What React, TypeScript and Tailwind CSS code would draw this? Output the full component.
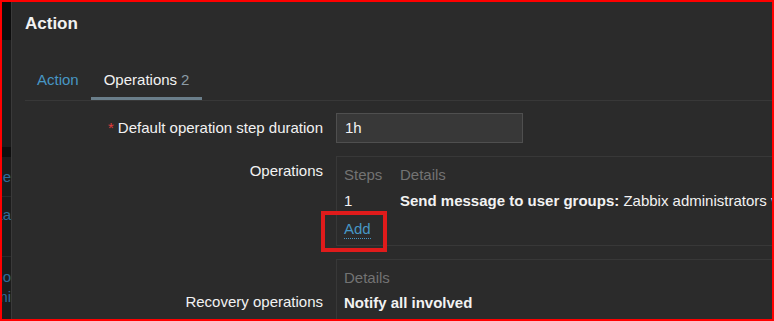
export default function App() {
  const font = "font-['Liberation_Sans',Arial,sans-serif]";

  return (
    <div className={`relative w-[774px] h-[321px] overflow-hidden border-2 border-[#ff0000] bg-[#2b2b2b] flex ${font} text-[15px] text-[#f2f2f2]`}>
      {/* page behind the dialog */}
      <div className="w-[10px] shrink-0 flex flex-col bg-[#1c1c1c] border-r border-[#3a3a3a] overflow-hidden text-[#2f6b99] leading-[18px]">
        <div className="h-[38px] shrink-0 bg-[#0c0c0c]" />
        <div className="h-[107px] shrink-0" />
        <div className="h-[10px] shrink-0 bg-[#0e0e0e]" />
        <div className="h-[40px] shrink-0 flex items-center justify-end border-b border-[#2a2a2a]">
          <span className="shrink-0 whitespace-nowrap">ne</span>
        </div>
        <div className="h-[60px] shrink-0 flex items-start pt-[9px] justify-end border-b border-[#2a2a2a]">
          <span className="shrink-0 whitespace-nowrap">aa</span>
        </div>
        <div className="shrink-0 flex flex-col items-end pt-[11px]">
          <span className="shrink-0 whitespace-nowrap">oo</span>
          <span className="shrink-0 whitespace-nowrap mt-[2px]">mi</span>
        </div>
      </div>

      <div className="flex-1 flex flex-col min-w-0">
        <div className="h-[44px] shrink-0 flex items-center pl-[13px]">
          <h1 className="text-[17px] font-bold text-[#f2f2f2]">Action</h1>
        </div>

        <div className="shrink-0 mt-[14px] ml-[13px] flex border-b border-[#383838]">
          <div className="h-[40px] flex items-center pt-[3px] px-[12px] border-b-[3px] border-transparent text-[#4796c4]">
            Action
          </div>
          <div className="h-[40px] flex items-center pt-[3px] px-[13px] border-b-[3px] border-[#6a7e8a] whitespace-nowrap">
            Operations <span className="ml-[4px] text-[#8b9ba5]">2</span>
          </div>
        </div>

        <div className="shrink-0 mt-[12px] grid grid-cols-[311px_1fr] gap-x-[13px] gap-y-[13px] leading-[18px]">
          <div className="h-[30px] flex items-center justify-end whitespace-nowrap">
            <span className="text-[#e33d3d] mr-[4px]">*</span>Default operation step duration
          </div>
          <div className="h-[30px] w-[187px] bg-[#383838] border border-[#4f4f4f] flex items-center px-[8px]">
            1h
          </div>

          <div className="text-right pt-[6px]">Operations</div>
          <div className="h-[90px] border border-[#383838] border-r-0 pl-[7px] pt-[9px] whitespace-nowrap">
            <div className="flex text-[#737373]">
              <span className="w-[56px]">Steps</span>
              <span>Details</span>
            </div>
            <div className="flex mt-[8px]">
              <span className="w-[56px]">1</span>
              <span>
                <b>Send message to user groups:</b> Zabbix administrators via all media
              </span>
            </div>
            <div className="mt-[10px]">
              <span className="inline-block text-[#4796c4] border-b border-dotted border-[#4796c4]">Add</span>
            </div>
          </div>

          <div className="text-right pt-[34px]">Recovery operations</div>
          <div className="h-[80px] border border-[#383838] border-r-0 pl-[7px] pt-[9px] whitespace-nowrap">
            <div className="text-[#737373]">Details</div>
            <div className="mt-[7px] font-bold">Notify all involved</div>
          </div>
        </div>
      </div>

      {/* highlight marker over the Add link */}
      <div className="absolute left-[319px] top-[209px] w-[66px] h-[41px] border-4 border-[#e01b1b]" />
    </div>
  );
}
